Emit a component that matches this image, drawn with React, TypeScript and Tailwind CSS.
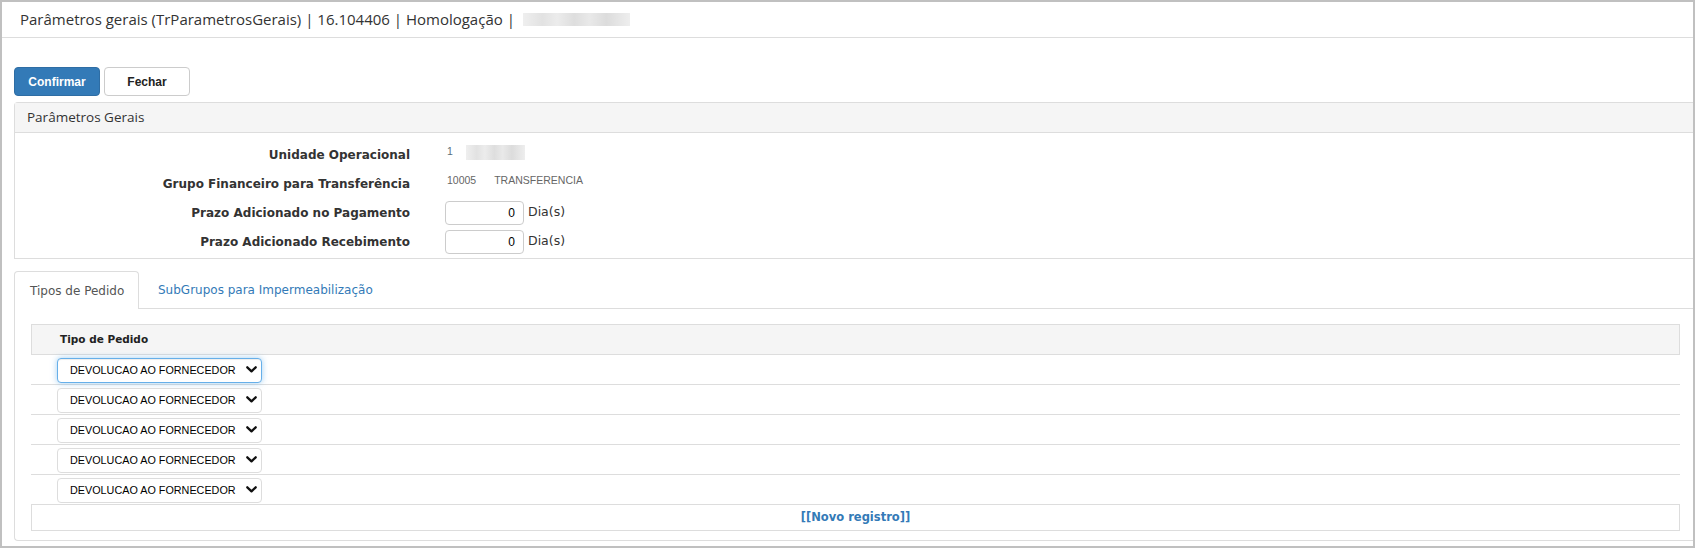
import React from 'react'

const ROWS = [0, 1, 2, 3, 4]

const Chevron = () => (
  <svg width="11" height="7" viewBox="0 0 11 7" className="pointer-events-none absolute right-[5px] top-[9px]">
    <path d="M1.3 1.3 L5.5 5.3 L9.7 1.3" fill="none" stroke="#111" strokeWidth="2.3" strokeLinecap="round" strokeLinejoin="round" />
  </svg>
)

const TipoSelect: React.FC<{ focused?: boolean }> = ({ focused }) => (
  <div className="relative w-[205px] h-[25px]">
    <select
      defaultValue="dev"
      className={`appearance-none w-full h-full bg-white rounded-[4px] pl-[12px] pr-[20px] text-[10.8px] text-black font-['Liberation_Sans',Arial,sans-serif] outline-none ${
        focused
          ? 'border border-[#66afe9] shadow-[inset_0_1px_1px_rgba(0,0,0,.075),0_0_6px_rgba(102,175,233,.6)]'
          : 'border border-[#ddd]'
      }`}
    >
      <option value="dev">DEVOLUCAO AO FORNECEDOR</option>
    </select>
    <Chevron />
  </div>
)

const Blur: React.FC<{ className: string }> = ({ className }) => (
  <div
    className={`${className} blur-[0.6px] bg-[linear-gradient(90deg,#efefef_0%,#e2e2e2_18%,#ececec_32%,#dedede_48%,#e9e9e9_62%,#dcdcdc_78%,#eeeeee_100%)]`}
  />
)

export default function App() {
  return (
    <div className="w-[1695px] h-[548px] border-2 border-[#c0c0c0] bg-white overflow-hidden flex flex-col font-['DejaVu_Sans',Verdana,sans-serif] text-[#333]">
      {/* cabeçalho da tela */}
      <div className="h-[36px] shrink-0 border-b border-[#ddd] flex items-center pl-[18px] font-['Open_Sans',sans-serif] text-[15px] text-[#333]">
        <span>Parâmetros gerais (TrParametrosGerais) | 16.104406 | Homologação |</span>
        <Blur className="ml-[8px] w-[107px] h-[13px]" />
      </div>

      <div className="flex gap-[4px] pl-[12px] mt-[29px] shrink-0">
        <button className="w-[86px] h-[29px] rounded-[4px] bg-[#337ab7] border border-[#2e6da4] text-white text-[12px] font-bold font-['Liberation_Sans',Arial,sans-serif]">
          Confirmar
        </button>
        <button className="w-[86px] h-[29px] rounded-[4px] bg-white border border-[#ccc] text-[#222] text-[12px] font-bold font-['Liberation_Sans',Arial,sans-serif]">
          Fechar
        </button>
      </div>

      {/* painel de parâmetros */}
      <div className="ml-[12px] mt-[6px] shrink-0 border-t border-l border-b border-[#ddd] rounded-tl-[4px]">
        <div className="h-[30px] bg-[#f5f5f5] border-b border-[#ddd] flex items-center pl-[12px] font-['Open_Sans',sans-serif] text-[13.5px] text-[#333]">
          Parâmetros Gerais
        </div>
        <div className="pt-[7px] pb-[2px]">
          <div className="grid grid-cols-[395px_1fr] gap-x-[35px] auto-rows-[29px] items-center">
            <div className="text-right text-[12px] font-bold text-[#333]">Unidade Operacional</div>
            <div className="flex items-center mb-[5px] pl-[2px] text-[10.5px] text-[#5a6f7a] font-['Liberation_Sans',Arial,sans-serif]">
              <span>1</span>
              <Blur className="ml-[13px] w-[59px] h-[15px]" />
            </div>

            <div className="text-right text-[12px] font-bold text-[#333]">Grupo Financeiro para Transferência</div>
            <div className="flex items-center mb-[5px] pl-[2px] gap-[18px] text-[10.5px] text-[#666] font-['Liberation_Sans',Arial,sans-serif]">
              <span>10005</span>
              <span>TRANSFERENCIA</span>
            </div>

            <div className="text-right text-[12px] font-bold text-[#333]">Prazo Adicionado no Pagamento</div>
            <div className="flex items-center">
              <input
                defaultValue="0"
                className="w-[79px] h-[24px] border border-[#ccc] rounded-[4px] text-right pr-[8px] text-[12px] text-black font-['Liberation_Sans',Arial,sans-serif] outline-none"
              />
              <span className="ml-[4px] text-[12.5px] text-[#333]">Dia(s)</span>
            </div>

            <div className="text-right text-[12px] font-bold text-[#333]">Prazo Adicionado Recebimento</div>
            <div className="flex items-center">
              <input
                defaultValue="0"
                className="w-[79px] h-[24px] border border-[#ccc] rounded-[4px] text-right pr-[8px] text-[12px] text-black font-['Liberation_Sans',Arial,sans-serif] outline-none"
              />
              <span className="ml-[4px] text-[12.5px] text-[#333]">Dia(s)</span>
            </div>
          </div>
        </div>
      </div>

      {/* abas */}
      <div className="ml-[12px] mt-[12px] h-[38px] shrink-0 border-b border-[#ddd] flex items-end">
        <div className="h-[38px] w-[125px] -mb-px bg-white border-t border-l border-r border-[#ddd] rounded-t-[4px] flex items-center pl-[15px] text-[12px] text-[#555]">
          Tipos de Pedido
        </div>
        <div className="h-[37px] flex items-center pl-[19px] text-[12px] text-[#337ab7]">
          SubGrupos para Impermeabilização
        </div>
      </div>

      <div className="ml-[12px] shrink-0 border-l border-b border-[#ddd] rounded-bl-[4px] pt-[15px] pl-[16px] pr-[13px] pb-[9px]">
        <div className="h-[31px] bg-[#f5f5f5] border border-[#ddd] flex items-center pl-[28px] text-[10.5px] font-bold text-[#222]">
          Tipo de Pedido
        </div>
        {ROWS.map((i) => (
          <div key={i} className="h-[30px] border-b border-[#ddd] flex items-center pl-[26px]">
            <TipoSelect focused={i === 0} />
          </div>
        ))}
        <div className="h-[26px] border-l border-r border-b border-[#ddd] flex items-center justify-center text-[11.5px] font-bold text-[#337ab7]">
          [[Novo registro]]
        </div>
      </div>
    </div>
  )
}
